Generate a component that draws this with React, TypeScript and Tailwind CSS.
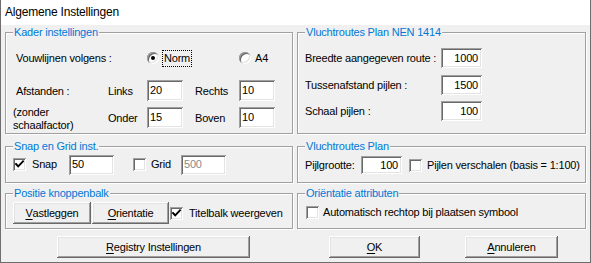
import React from 'react';

const sunken =
  'bg-white shadow-[inset_1px_1px_0_#a0a0a0,inset_-1px_-1px_0_#ffffff,inset_2px_2px_0_#696969,inset_-2px_-2px_0_#e3e3e3]';
const raised =
  'bg-[#f0f0f0] shadow-[inset_-1px_-1px_0_#696969,inset_1px_1px_0_#ffffff,inset_-2px_-2px_0_#a0a0a0,inset_2px_2px_0_#e3e3e3]';

function Group({ title, className, children }: { title: string; className: string; children: React.ReactNode }) {
  return (
    <div className={`relative border border-[#a0a0a0] shadow-[inset_1px_1px_0_#fff,1px_1px_0_#fff] ${className}`}>
      <span className="absolute left-[7px] -top-[7px] bg-[#f0f0f0] px-[1px] leading-[13px] text-[#0078d7]">{title}</span>
      {children}
    </div>
  );
}

function Field({ value, w, h = 'h-[21px]', right = false, disabled = false }: { value: string; w: string; h?: string; right?: boolean; disabled?: boolean }) {
  return (
    <div
      className={`${sunken} ${w} ${h} flex items-center shrink-0 ${right ? 'justify-end pr-[4px]' : 'pl-[3px]'} ${disabled ? 'text-[#8a8a8a]' : 'text-black'}`}
    >
      {value}
    </div>
  );
}

function Check({ checked }: { checked: boolean }) {
  return (
    <div className={`${sunken} w-[13px] h-[13px] shrink-0 relative`}>
      {checked && (
        <svg width="13" height="13" viewBox="0 0 13 13" className="absolute left-0 top-0">
          <polyline points="3,6 5.2,8.4 10,3.4" fill="none" stroke="#000" strokeWidth="1.9" strokeLinecap="square" />
        </svg>
      )}
    </div>
  );
}

function Radio({ checked }: { checked: boolean }) {
  return (
    <div className="w-[12px] h-[12px] rounded-full bg-white shrink-0 flex items-center justify-center shadow-[inset_1px_1px_0_#a0a0a0,inset_-1px_-1px_0_#ffffff,inset_2px_2px_0_#696969,inset_-2px_-2px_0_#e3e3e3]">
      {checked && <div className="w-[4px] h-[4px] rounded-full bg-black" />}
    </div>
  );
}

function Button({ w, children, className = '' }: { w: string; children: React.ReactNode; className?: string }) {
  return (
    <div className={`${raised} ${w} h-[22px] flex items-center justify-center shrink-0 ${className}`}>{children}</div>
  );
}

export default function App() {
  return (
    <div className="w-[591px] h-[263px] bg-[#f0f0f0] border-x border-b border-[#6e6e6e] flex flex-col font-['Liberation_Sans',Arial,sans-serif] text-[11px] tracking-[-0.2px] text-black leading-[13px]">
      <div className="h-[25px] shrink-0 bg-white pl-[4px] flex items-center text-[12px] tracking-[-0.2px]">
        Algemene Instellingen
      </div>

      <div className="flex gap-[4px] pl-[4px] pt-[7px]">
        {/* left column */}
        <div className="w-[288px] flex flex-col">
          <Group title="Kader instellingen" className="h-[102px] pt-[17px]">
            <div className="flex items-center h-[16px] pl-[10px]">
              <div className="w-[131px]">Vouwlijnen volgens :</div>
              <div className="w-[92px] flex items-center">
                <Radio checked />
                <span className="ml-[3px] border border-dotted border-black px-[1px] leading-[15px]">Norm</span>
              </div>
              <div className="flex items-center">
                <Radio checked={false} />
                <span className="ml-[4px]">A4</span>
              </div>
            </div>
            <div className="flex items-center h-[21px] mt-[14px] pl-[10px]">
              <div className="w-[92px] pt-[2px]">Afstanden :</div>
              <div className="w-[39px] pt-[2px]">Links</div>
              <Field value="20" w="w-[36px]" />
              <div className="w-[44px] ml-[12px] pt-[2px]">Rechts</div>
              <Field value="10" w="w-[36px]" />
            </div>
            <div className="flex items-center h-[21px] mt-[6px] pl-[10px]">
              <div className="w-[92px] -ml-[3px] mr-[3px] pt-[2px]">
                (zonder
                <br />
                schaalfactor)
              </div>
              <div className="w-[39px] pt-[2px]">Onder</div>
              <Field value="15" w="w-[36px]" />
              <div className="w-[44px] ml-[12px] pt-[2px]">Boven</div>
              <Field value="10" w="w-[36px]" />
            </div>
          </Group>

          <Group title="Snap en Grid inst." className="h-[37px] mt-[12px] pt-[8px]">
            <div className="flex items-center h-[19px] pl-[7px]">
              <Check checked />
              <div className="w-[37px] ml-[6px]">Snap</div>
              <Field value="50" w="w-[45px]" h="h-[20px]" />
              <div className="ml-[19px]">
                <Check checked={false} />
              </div>
              <div className="w-[30px] ml-[5px]">Grid</div>
              <Field value="500" w="w-[45px]" h="h-[20px]" disabled />
            </div>
          </Group>

          <Group title="Positie knoppenbalk" className="h-[36px] mt-[10px] pt-[8px]">
            <div className="flex items-center h-[22px] pl-[7px]">
              <Button w="w-[78px]">
                <span className="underline underline-offset-2">V</span>astleggen
              </Button>
              <Button w="w-[77px]" className="ml-[1px]">
                <span className="underline underline-offset-2">O</span>rientatie
              </Button>
              <div className="ml-[1px]">
                <Check checked />
              </div>
              <span className="ml-[6px]">Titelbalk weergeven</span>
            </div>
          </Group>
        </div>

        {/* right column */}
        <div className="w-[289px] flex flex-col">
          <Group title="Vluchtroutes Plan NEN 1414" className="h-[102px] pt-[15px] pl-[7px]">
            <div className="flex items-center h-[20px]">
              <div className="w-[136px] pt-[1px]">Breedte aangegeven route :</div>
              <Field value="1000" w="w-[41px]" h="h-[20px]" right />
            </div>
            <div className="flex items-center h-[20px] mt-[7px]">
              <div className="w-[136px] pt-[1px]">Tussenafstand pijlen :</div>
              <Field value="1500" w="w-[41px]" h="h-[20px]" right />
            </div>
            <div className="flex items-center h-[20px] mt-[6px]">
              <div className="w-[136px] pt-[1px]">Schaal pijlen :</div>
              <Field value="100" w="w-[41px]" h="h-[20px]" right />
            </div>
          </Group>

          <Group title="Vluchtroutes Plan" className="h-[37px] mt-[12px] pt-[9px] pl-[7px]">
            <div className="flex items-center h-[18px]">
              <div className="w-[56px]">Pijlgrootte:</div>
              <Field value="100" w="w-[41px]" h="h-[18px]" right />
              <div className="ml-[7px]">
                <Check checked={false} />
              </div>
              <span className="ml-[5px]">Pijlen verschalen (basis = 1:100)</span>
            </div>
          </Group>

          <Group title="Oriëntatie attributen" className="h-[36px] mt-[10px] pt-[7px] pl-[8px]">
            <div className="flex items-center h-[22px]">
              <Check checked={false} />
              <span className="ml-[4px]">Automatisch rechtop bij plaatsen symbool</span>
            </div>
          </Group>
        </div>
      </div>

      <div className="flex items-center mt-[7px]">
        <Button w="w-[193px]" className="ml-[56px]">
          <span className="underline underline-offset-2">R</span>egistry Instellingen
        </Button>
        <Button w="w-[91px]" className="ml-[79px]">
          <span className="underline underline-offset-2">O</span>K
        </Button>
        <Button w="w-[93px]" className="ml-[45px]">
          <span className="underline underline-offset-2">A</span>nnuleren
        </Button>
      </div>
    </div>
  );
}
